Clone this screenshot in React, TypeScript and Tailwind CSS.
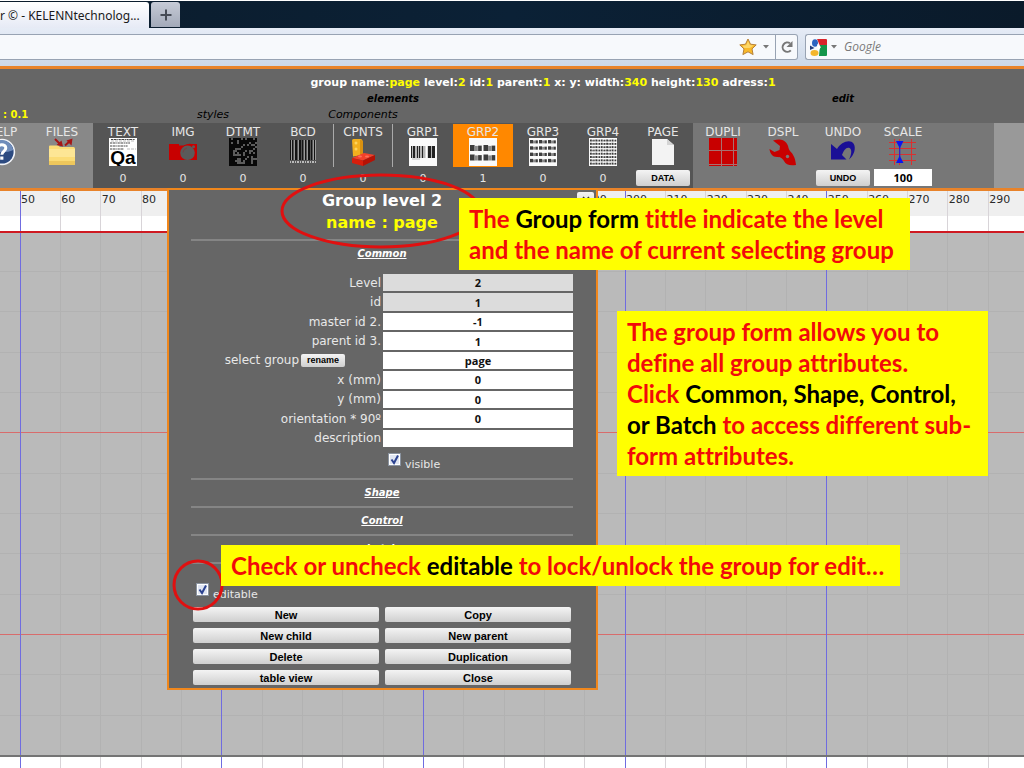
import React from "react";

const VERDANA = "font-['DejaVu_Sans',Verdana,sans-serif]";
const BTN =
  "rounded-[2px] bg-linear-to-b from-[#f4f4f4] to-[#cfcfcf] font-['Liberation_Sans',Arial,sans-serif] font-bold text-black flex items-center justify-center";

/* ---------- toolbar icons ---------- */

function Icon({ children }: { children?: React.ReactNode }) {
  return (
    <svg viewBox="0 0 28 28" className="size-7 shrink-0" aria-hidden="true">
      {children}
    </svg>
  );
}

const HelpIcon = () => (
  <Icon>
    <circle cx="14" cy="14" r="13.200" fill="#f2f4f8" />
    <circle cx="14" cy="14" r="11.600" fill="#2c4a80" />
    <path d="M2.700 12a11.400 11.400 0 0 1 22.600 0c-6 3-16.600 3-22.600 0z" fill="#6f8cba" />
    <path d="M9.500 10.500c.3-5 8.300-5 8.300-.5 0 3.500-4 3.300-4 6.800" fill="none" stroke="#fff" strokeWidth="3" />
    <rect x="12.200" y="18.500" width="3.200" height="3.200" fill="#fff" />
  </Icon>
);

const FilesIcon = () => (
  <Icon>
    <path d="M1 8.500q0-1 1-1h8l2 1.500h13.500q1.500 0 1.500 1.500V26q0 1-1 1H2q-1 0-1-1z" fill="#fbdc76" />
    <path d="M1 11h26v8H1z" fill="#fde695" />
    <path d="M1 23h26v3q0 1-1 1H2q-1 0-1-1z" fill="#eec75c" />
    <path d="M7 1l5 5M17 7.500l5-4.500" stroke="#a51616" strokeWidth="2" />
    <path d="M15 8.500l-6.500-1.500 5-4.500zM24.500.5l-1 7-5-5z" fill="#a51616" />
  </Icon>
);

const TextIcon = () => (
  <Icon>
    <rect width="28" height="28" fill="#fff" />
    <path d="M2 1.500h24M1 5h20M1 8h18M1 11h14" stroke="#444" strokeWidth="1.200" strokeDasharray="2 .6 3 .7 1 .5" />
    <path d="M2 3h24M18 11h9" stroke="#aaa" strokeWidth=".8" strokeDasharray="3 1" />
    <text x="14" y="26" textAnchor="middle" fontSize="19" fontWeight="700" fontFamily="Liberation Sans, Arial, sans-serif">
      Qa
    </text>
  </Icon>
);

const ImgIcon = () => (
  <Icon>
    <path d="M0 6h10v1.500h4.500Q19 5 23 6h5v16H0z" fill="#c80000" />
    <circle cx="18.500" cy="14.800" r="7.300" fill="#5a5a5a" />
    <circle cx="24.500" cy="8.800" r="1.500" fill="#5a5a5a" />
    <path d="M14 14.500a5 5 0 0 1 4-4.500" fill="none" stroke="#7a4040" strokeWidth="1" />
  </Icon>
);

const MATRIX = Array.from({ length: 14 * 14 }, (_, i) => {
  const c = i % 14;
  const r = Math.floor(i / 14);
  const hash = Math.abs(Math.sin(c * 12.9898 + r * 78.233) * 43758.5453) % 1;
  return c === 0 || r === 13 || hash < 0.62;
});

const DataMatrixIcon = () => (
  <Icon>
    <rect width="28" height="28" fill="#5c5c5c" />
    {MATRIX.map((on, i) =>
      on ? <rect key={i} x={(i % 14) * 2} y={Math.floor(i / 14) * 2} width="2" height="2" fill="#080808" /> : null,
    )}
  </Icon>
);

const BarcodeIcon = () => (
  <Icon>
    {[
      [1, 1], [3, 1], [6, 2], [10, 2], [13, 1], [16, 1], [19, 2], [22, 1], [25, 1],
    ].map(([x, w]) => (
      <rect key={x} x={x} y="2" width={w} height="20" fill="#141414" />
    ))}
    {[2, 5, 9, 15, 18, 24, 26].map((x) => (
      <rect key={x} x={x} y="2" width="1" height="20" fill="#9a9a9a" />
    ))}
    <path d="M1 24h26" stroke="#bbb" strokeWidth="2" strokeDasharray="1 1 2 1" />
  </Icon>
);

const BrickIcon = () => (
  <Icon>
    <path d="M3 2.500q0-1.500 1.500-1.500h7q2 0 2 2V17l-9.500 1.500z" fill="#f2b01e" />
    <path d="M11 1.500l3 1.500v13l-3 1.500z" fill="#d99110" />
    <circle cx="7" cy="5" r="1.500" fill="#ffd45c" />
    <circle cx="7" cy="11" r="1.500" fill="#ffd45c" />
    <path d="M3 20l12-5 11 2-12 5.500z" fill="#f3412b" />
    <path d="M3 20l11 2.500V28L3 25z" fill="#d81e0c" />
    <path d="M14 22.500L26 17v5l-12 6z" fill="#b51205" />
    <ellipse cx="11" cy="18.500" rx="2" ry="1.100" fill="#ff7058" />
    <ellipse cx="18" cy="18.500" rx="2" ry="1.100" fill="#ff7058" />
  </Icon>
);

const Grp1Icon = () => (
  <Icon>
    <rect width="28" height="28" fill="#fafafa" />
    <rect x="2" y="8" width="24" height="12" fill="#b5b5b5" />
    {[[2, 1], [4, 2], [8, 1], [10, 1], [13, 1], [19, 3], [23, 3]].map(([x, w]) => (
      <rect key={x} x={x} y="8" width={w} height="12" fill="#222" />
    ))}
    <path d="M17.500 8v12" stroke="#fff" strokeWidth="2" />
    <path d="M3 21h8" stroke="#bbb" strokeWidth="1" />
  </Icon>
);

type GroupGridProps = { rows: number; cols: number; top: number; pitch: number; height: number };

function GroupGrid({ rows, cols, top, pitch, height }: GroupGridProps) {
  const cw = 27 / cols;
  return (
    <Icon>
      <rect width="28" height="28" fill="#fafafa" />
      {Array.from({ length: rows * cols }, (_, i) => {
        const x = (i % cols) * cw + 1;
        const y = top + Math.floor(i / cols) * pitch;
        return (
          <g key={i} fill="#3c3c3c">
            <rect x={x} y={y} width={cw * 0.34} height={height} />
            <rect x={x + cw * 0.34} y={y + height * 0.15} width={cw * 0.24} height={height * 0.85} fill="#8a8a8a" />
            <rect x={x + cw * 0.6} y={y + height * 0.1} width={cw * 0.27} height={height * 0.9} />
          </g>
        );
      })}
    </Icon>
  );
}

const PageIcon = () => (
  <Icon>
    <path d="M3 1h15l7 6v20H3z" fill="#f3f3f3" />
    <path d="M18 1l7 6h-7z" fill="#d4d4d4" />
  </Icon>
);

const DupliIcon = () => (
  <Icon>
    <path d="M0 0h28v28H0z" fill="#c80000" />
    <path d="M12.500 0v28M0 12.500h28M24.500 0v28M0 26.500h28" stroke="#a87070" strokeWidth="1" />
  </Icon>
);

const WrenchIcon = () => (
  <Icon>
    <path
      d="M4 2.500Q13-.5 17 4.500c3 3.500 2 6 4 8.500 3 3 5 6 6 14-6 1-10 0-12-4-2-3.500-4-4-7-4-4.500 0-7-3.500-7.500-8l5 3 5-2 .5-4z"
      fill="#c80000"
    />
    <circle cx="18.500" cy="18.500" r="1.700" fill="#777" />
  </Icon>
);

const UndoIcon = () => (
  <Icon>
    <path d="M2 6v15.500h15.500l-4.500-4.500c2-5 4-8 7-7.200 3 1 3 5.500 0 11.700 5-4 7.500-11.500 4.500-16C21 1 12 4 8 11z" fill="#1a0f96" />
  </Icon>
);

const ScaleIcon = () => (
  <Icon>
    <path d="M5.500 1v26M22.500 1v26M10.500 1v26M0 4.500h27M0 10.500h27M0 16.500h27M0 22.500h27" stroke="#d93030" strokeWidth="1" />
    <path d="M7 3h7.500l-3.750 7.500zM7 25h7.500L10.750 17.500z" fill="#0a14f0" />
    <path d="M10.750 9v10" stroke="#0a14f0" strokeWidth="1" />
  </Icon>
);

/* ---------- toolbar ---------- */

type ToolProps = {
  label: string;
  icon: React.ReactNode;
  active?: boolean;
  divided?: boolean;
  count?: number;
  children?: React.ReactNode;
};

function Tool({ label, icon, active, divided, count, children }: ToolProps) {
  return (
    <div className="flex w-[60px] shrink-0 flex-col items-center pt-px">
      <button
        type="button"
        className={`flex h-[43px] w-full flex-col items-center pt-0.5 text-xs leading-3 text-[#e6e6e6] ${
          active ? "bg-[#ff8800]" : ""
        } ${divided ? "border-x border-[#aaaaaa]" : ""}`}
      >
        <span>{label}</span>
        {icon}
      </button>
      <div className="flex h-[21px] items-center justify-center">
        {count !== undefined && <span className="pt-[3px] text-[11px] leading-4 text-[#e6e6e6]">{count}</span>}
        {children}
      </div>
    </div>
  );
}

function Header() {
  const status: [string, string][] = [
    ["group name:", "page"],
    [" level:", "2"],
    [" id:", "1"],
    [" parent:", "1"],
    [" x: y: width:", "340"],
    [" height:", "130"],
    [" adress:", "1"],
  ];
  return (
    <header className="border-t-[3px] border-b-[3px] border-[#e8832a] bg-[#666666]">
      <div className="grid grid-cols-[93px_240px_60px_300px_300px_1fr] pt-1.5 leading-4 text-black">
        <p className="col-span-4 col-start-2 text-center text-[11px] leading-4 font-bold whitespace-pre text-white">
          {status.map(([k, v]) => (
            <React.Fragment key={k}>
              {k}
              <span className="text-[#ffff00]">{v}</span>
            </React.Fragment>
          ))}
        </p>
        <p className="col-span-3 col-start-2 row-start-2 text-center text-[10px] leading-4 font-bold italic">elements</p>
        <p className="col-start-5 row-start-2 text-center text-[10px] leading-4 font-bold italic">edit</p>
        <p className="row-start-3 pl-[3px] text-[10px] leading-4 font-bold text-[#ffff00]">: 0.1</p>
        <p className="col-start-2 row-start-3 text-center text-[11px] leading-4 italic">styles</p>
        <p className="col-start-3 row-start-3 flex justify-center text-[11px] leading-4 italic">Components</p>
      </div>
      <nav className="flex h-[65px] bg-[#999999]">
        <div className="flex w-[93px] shrink-0 justify-end overflow-hidden bg-[#888888] pr-px">
          <Tool label="HELP" icon={<HelpIcon />} />
          <Tool label="FILES" icon={<FilesIcon />} />
        </div>
        <div className="flex shrink-0 bg-[#555555]">
          <Tool label="TEXT" icon={<TextIcon />} count={0} />
          <Tool label="IMG" icon={<ImgIcon />} count={0} />
          <Tool label="DTMT" icon={<DataMatrixIcon />} count={0} />
          <Tool label="BCD" icon={<BarcodeIcon />} count={0} />
          <Tool label="CPNTS" icon={<BrickIcon />} divided count={0} />
          <Tool label="GRP1" icon={<Grp1Icon />} count={0} />
          <Tool label="GRP2" icon={<GroupGrid rows={2} cols={2} top={7} pitch={9.5} height={6} />} active count={1} />
          <Tool label="GRP3" icon={<GroupGrid rows={4} cols={3} top={2} pitch={6.3} height={3.4} />} count={0} />
          <Tool label="GRP4" icon={<GroupGrid rows={8} cols={5} top={1.5} pitch={3.3} height={2} />} count={0} />
          <Tool label="PAGE" icon={<PageIcon />}>
            <button type="button" className={`${BTN} h-4 w-[54px] pt-0.5 text-[9px]`}>DATA</button>
          </Tool>
        </div>
        <div className="flex w-[301px] shrink-0 bg-[#777777]">
          <Tool label="DUPLI" icon={<DupliIcon />} />
          <Tool label="DSPL" icon={<WrenchIcon />} />
          <Tool label="UNDO" icon={<UndoIcon />}>
            <button type="button" className={`${BTN} h-4 w-[54px] pt-0.5 text-[9px]`}>UNDO</button>
          </Tool>
          <Tool label="SCALE" icon={<ScaleIcon />}>
            <input
              aria-label="Scale"
              defaultValue="100"
              className="h-[17px] w-[58px] bg-white text-center font-['Open_Sans',sans-serif] text-[11px] font-bold text-black"
            />
          </Tool>
        </div>
      </nav>
    </header>
  );
}

/* ---------- browser chrome ---------- */

function BrowserChrome() {
  return (
    <div className="font-['Open_Sans','Noto_Sans',sans-serif]">
      <div className="flex h-7 items-stretch border-t border-white bg-linear-to-r from-[#0b1c2c] via-[#0b2136] to-[#0a1a2a]">
        <div className="mt-px flex w-[149px] items-center overflow-hidden rounded-tr-[3px] bg-linear-to-b from-white to-[#e6eaf5] pt-0.5 font-['Noto_Sans',sans-serif] text-xs whitespace-nowrap text-[#1a1a1a]">
          r © - KELENNtechnolog...
        </div>
        <button
          type="button"
          aria-label="New tab"
          className="mt-px mb-px ml-0.5 flex w-[29px] items-center justify-center rounded-t-[3px] bg-linear-to-b from-[#c6cbd6] to-[#a3aab9]"
        >
          <svg viewBox="0 0 12 12" className="size-3" aria-hidden="true">
            <path d="M6 .5v11M.5 6h11" stroke="#454b55" strokeWidth="2" />
          </svg>
        </button>
      </div>
      <div className="flex h-[38px] items-start gap-[7px] bg-linear-to-b from-[#e6ecf6] to-[#ccd8e8] pt-1.5">
        <div className="flex h-[26px] w-[798px] shrink-0 items-stretch justify-end rounded-r-[3px] border border-l-0 border-[#98a3b3] bg-[#f7f9fc]">
          <div className="flex items-center gap-1.5 pr-1.5">
            <svg viewBox="0 0 18 18" className="size-[18px]" aria-hidden="true">
              <path
                d="M9 1l2.500 5.200 5.700.7-4.200 4 1.100 5.700L9 13.800l-5.100 2.800L5 10.900.8 6.900l5.700-.7z"
                fill="#f9b92a"
                stroke="#b5813a"
                strokeWidth="1"
              />
              <path d="M9 3l1.800 4 4 .6-4 2.400H5L3.500 7.800l3.700-.6z" fill="#fdd768" />
            </svg>
            <svg viewBox="0 0 6 4" className="h-1 w-1.5" aria-hidden="true">
              <path d="M0 0h6L3 3.500z" fill="#777" />
            </svg>
          </div>
          <button type="button" aria-label="Reload" className="flex w-[22px] items-center justify-center border-l border-[#98a3b3]">
            <svg viewBox="0 0 14 14" className="size-3.5" aria-hidden="true">
              <path d="M10.800 10.300A4.700 4.700 0 1 1 10 3.300" fill="none" stroke="#777" strokeWidth="2" />
              <path d="M12.500 1v6h-6z" fill="#777" />
            </svg>
          </button>
        </div>
        <div className="flex h-[26px] min-w-0 flex-1 items-center rounded-l-[3px] border border-r-0 border-[#98a3b3] bg-[#f7f9fc] pl-1">
          <svg viewBox="0 0 17 17" className="size-[17px] shrink-0" aria-hidden="true">
            <path d="M7 0h9q1 0 1 1v6H10z" fill="#d9242b" />
            <path d="M10 6h7v10q0 1-1 1H9z" fill="#14964a" />
            <ellipse cx="5" cy="4" rx="3" ry="3.800" fill="#2b63c0" />
            <path d="M0 6.500l4.500 2.500L0 11z" fill="#223c7c" />
            <ellipse cx="4.500" cy="14" rx="4" ry="3" fill="#f4b62c" />
            <path d="M7 5l4 3-3 4z" fill="#fff" />
          </svg>
          <svg viewBox="0 0 6 4" className="ml-1 h-1 w-1.5 shrink-0" aria-hidden="true">
            <path d="M0 0h6L3 3.500z" fill="#777" />
          </svg>
          <input
            aria-label="Search"
            placeholder="Google"
            className="ml-[7px] min-w-0 flex-1 bg-transparent text-xs italic outline-none placeholder:text-[#7a7a7a]"
          />
        </div>
      </div>
    </div>
  );
}

/* ---------- drawing area ---------- */

const STEP = 40.34;
const TICKS = [0, 1, 2, 3, 14, 15, 16, 17, 18, 19, 20, 21, 22, 23, 24];

function Canvas() {
  const cols = Array.from({ length: 60 }, (_, i) => i);
  const x = (i: number) => Math.floor(20 + i * STEP) + 0.5;
  const y = (i: number) => Math.floor(40 + i * STEP) + 0.5;
  return (
    <svg className="absolute inset-0 h-full w-full" aria-hidden="true">
      <rect width="100%" height="100%" fill="#ffffff" />
      <rect width="100%" height="25" fill="#efefef" />
      {cols.map((i) => (
        <line key={i} x1={x(i)} x2={x(i)} y1="0" y2="100%" stroke="#d8d4d8" />
      ))}
      <rect y="41" width="100%" height="524" fill="#bababa" />
      {cols.map((i) => (
        <line key={i} x1={x(i)} x2={x(i)} y1="41" y2="565" stroke="#b2b2b2" />
      ))}
      {cols.slice(1, 13).map((i) => (
        <line key={i} x1="0" x2="100%" y1={y(i)} y2={y(i)} stroke="#b2b2b2" />
      ))}
      {[5, 10].map((i) => (
        <line key={i} x1="0" x2="100%" y1={y(i)} y2={y(i)} stroke="#d86c6c" />
      ))}
      {cols.filter((i) => i % 5 === 0).map((i) => (
        <line key={i} x1={x(i)} x2={x(i)} y1="0" y2="100%" stroke="#706ce0" />
      ))}
      <rect y="40" width="100%" height="2" fill="#cf1a22" />
      <rect y="564" width="100%" height="2" fill="#747474" />
      {TICKS.map((i) => (
        <text key={i} x={21 + i * STEP} y="12" fontSize="11" fill="#2a2a2a" fontFamily="DejaVu Sans, Verdana, sans-serif">
          {50 + i * 10}
        </text>
      ))}
    </svg>
  );
}

/* ---------- group form ---------- */

const Rule = () => <hr className="h-0.5 border-0 bg-[#858585]" />;

const Section = ({ children }: { children: string }) => (
  <button type="button" className="block h-[26px] w-full pb-0.5 text-center text-[10px] font-bold text-white italic underline">
    {children}
  </button>
);

function Check({ id, label }: { id: string; label: string }) {
  return (
    <div className="flex h-5 items-start gap-1">
      <span className="relative size-[13px]">
        <input
          id={id}
          type="checkbox"
          defaultChecked
          className="peer block size-[13px] appearance-none border border-[#8a93a0] bg-[#dfe5f2] outline outline-white -outline-offset-2"
        />
        <svg viewBox="0 0 13 13" className="pointer-events-none absolute inset-0 hidden peer-checked:block" aria-hidden="true">
          <path d="M3.500 6.500l2.500 3.500 4-7.500" fill="none" stroke="#2c4390" strokeWidth="2" />
        </svg>
      </span>
      <label htmlFor={id} className="pt-1 text-[11px] leading-4 text-[#e8e8e8]">
        {label}
      </label>
    </div>
  );
}

const FIELDS: { label: string; value: string; locked?: boolean; rename?: boolean }[] = [
  { label: "Level", value: "2", locked: true },
  { label: "id", value: "1", locked: true },
  { label: "master id 2.", value: "-1" },
  { label: "parent id 3.", value: "1" },
  { label: "select group", value: "page", rename: true },
  { label: "x (mm)", value: "0" },
  { label: "y (mm)", value: "0" },
  { label: "orientation * 90º", value: "0" },
  { label: "description", value: "" },
];

const ACTIONS = ["New", "Copy", "New child", "New parent", "Delete", "Duplication", "table view", "Close"];

function GroupForm() {
  return (
    <form
      onSubmit={(e) => e.preventDefault()}
      className="absolute -top-[3px] left-[167px] w-[431px] border-2 border-[#f0871c] bg-[#666666] pr-[23px] pb-[3px] pl-[22px]"
    >
      <button type="button" aria-label="Close form" className={`${BTN} absolute top-0.5 right-0.5 h-4 w-[17px]`}>
        <svg viewBox="0 0 8 8" className="size-2" aria-hidden="true">
          <path d="M1 1l6 6M7 1L1 7" stroke="#333" strokeWidth="1.500" />
        </svg>
      </button>
      <h1 className="h-[49px] text-center text-base leading-[22px] font-bold text-white">
        Group level 2
        <span className="block text-[#ffff00]">name : page</span>
      </h1>
      <Rule />
      <Section>Common</Section>
      <div className="mt-[7px] grid h-[173px] grid-rows-9 gap-0.5">
        {FIELDS.map((f) => (
          <div key={f.label} className="flex items-center">
            <div
              className={`flex w-48 items-center justify-end gap-0.5 text-xs leading-4 text-[#e8e8e8] ${
                f.rename ? "pr-[38px]" : "pr-0.5"
              }`}
            >
              <label htmlFor={f.label}>{f.label}</label>
              {f.rename && (
                <button type="button" className={`${BTN} h-[13px] w-11 text-[9px]`}>
                  rename
                </button>
              )}
            </div>
            <input
              id={f.label}
              defaultValue={f.value}
              readOnly={f.locked}
              className={`h-full min-w-0 flex-1 text-center font-['Open_Sans',sans-serif] text-[11px] font-bold text-[#111111] ${
                f.locked ? "bg-[#dcdcdc]" : "bg-white"
              }`}
            />
          </div>
        ))}
      </div>
      <div className="mt-1.5 mb-[5px] pl-[197px]">
        <Check id="visible" label="visible" />
      </div>
      <Rule />
      <Section>Shape</Section>
      <Rule />
      <Section>Control</Section>
      <Rule />
      <Section>batch</Section>
      <Rule />
      <div className="mt-[19px] mb-1 pl-[5px]">
        <Check id="editable" label="editable" />
      </div>
      <div className="grid grid-cols-2 gap-1.5 px-0.5">
        {ACTIONS.map((a) => (
          <button key={a} type="button" className={`${BTN} h-[15px] pt-0.5 text-[11px]`}>
            {a}
          </button>
        ))}
      </div>
    </form>
  );
}

/* ---------- annotations ---------- */

const NOTE =
  "absolute bg-[#ffff00] px-2.5 py-[5px] font-['Lato','Open_Sans',sans-serif] text-2xl leading-[31px] font-bold text-[#f20a0a] whitespace-nowrap [font-variant-ligatures:none]";

const Key = ({ children }: { children: string }) => <span className="text-black">{children}</span>;

export default function App() {
  return (
    <div className={`flex min-h-screen flex-col overflow-hidden bg-white ${VERDANA}`}>
      <BrowserChrome />
      <Header />
      <main className="relative min-h-[576px] flex-1">
        <Canvas />
        <GroupForm />
        <svg className="pointer-events-none absolute -top-5 left-[278px] h-[82px] w-[208px]" viewBox="0 0 208 82" aria-hidden="true">
          <ellipse cx="103" cy="40" rx="99" ry="36" fill="none" stroke="#e01010" strokeWidth="3" />
        </svg>
        <svg className="pointer-events-none absolute top-[367px] left-[171px] size-[54px]" viewBox="0 0 54 54" aria-hidden="true">
          <circle cx="27" cy="27" r="24" fill="none" stroke="#e01010" strokeWidth="3" />
        </svg>
        <p className={`${NOTE} top-[7px] left-[459px] w-[451px]`}>
          The <Key>Group form</Key> tittle indicate the level
          <br />
          and the name of current selecting group
        </p>
        <p className={`${NOTE} top-[120px] left-[617px] w-[371px]`}>
          The group form allows you to
          <br />
          define all group attributes.
          <br />
          Click <Key>Common, Shape, Control,</Key>
          <br />
          <Key>or Batch</Key> to access different sub-
          <br />
          form attributes.
        </p>
        <p className={`${NOTE} top-[354px] left-[221px] w-[679px]`}>
          Check or uncheck <Key>editable</Key> to lock/unlock the group for edit…
        </p>
      </main>
    </div>
  );
}
